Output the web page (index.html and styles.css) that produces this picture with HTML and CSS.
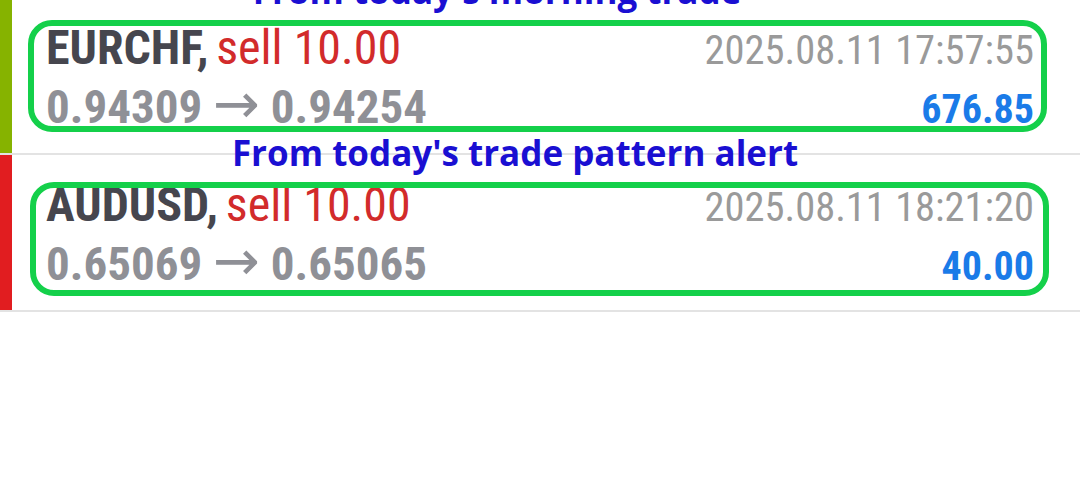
FILE: index.html
```html
<!DOCTYPE html>
<html lang="en">
<head>
  <meta charset="UTF-8" />
  <meta name="viewport" content="width=device-width, initial-scale=1.0" />
  <title>History</title>
  <link rel="stylesheet" href="styles.css">
</head>
<body>
  <div class="trades">
    <div class="trade">
      <div class="trade-bar green"></div>
      <div class="trade-body">
        <div class="trade-line">
          <span><b class="symbol">EURCHF,</b> <span class="side">sell 10.00</span></span>
          <span class="time">2025.08.11 17:57:55</span>
        </div>
        <div class="trade-line">
          <span class="prices">0.94309 <span class="arrow">&rarr;</span> 0.94254</span>
          <span class="profit">676.85</span>
        </div>
      </div>
      <div class="ring ring-first"></div>
    </div>

    <div class="trade">
      <div class="trade-bar red"></div>
      <div class="trade-body">
        <div class="trade-line">
          <span><b class="symbol">AUDUSD,</b> <span class="side">sell 10.00</span></span>
          <span class="time">2025.08.11 18:21:20</span>
        </div>
        <div class="trade-line">
          <span class="prices">0.65069 <span class="arrow">&rarr;</span> 0.65065</span>
          <span class="profit">40.00</span>
        </div>
      </div>
      <div class="ring ring-second"></div>
    </div>

    <div class="note note-first">From today's morning trade</div>
    <div class="note note-second">From today's trade pattern alert</div>
  </div>
</body>
</html>
```

FILE: styles.css
```css
body {
  margin: 0;
  background: #fff;
  overflow: hidden;
  font-family: "Roboto Condensed", Roboto, sans-serif;
  font-stretch: condensed;
}

.trades {
  position: relative;
  margin-top: -2px;
}

.trade {
  position: relative;
  display: flex;
  height: 155px;
  border-bottom: 2px solid #e3e3e3;
}

.trade-bar {
  width: 12px;
  flex-shrink: 0;
}

.green { background: #86b300; }
.red { background: #e11d20; }

.trade-body {
  flex: 1;
  padding: 22px 46px 0 34px;
}

.trade-line {
  display: flex;
  justify-content: space-between;
  align-items: baseline;
  height: 56px;
  line-height: 56px;
}

.symbol {
  font-size: 48px;
  font-weight: 700;
  color: #46464e;
  margin-right: 4px;
}

.side {
  font-size: 48px;
  color: #d22b2b;
}

.time {
  font-size: 40.5px;
  color: #9a9a9a;
}

.prices {
  font-size: 47px;
  font-weight: 700;
  color: #8f9096;
}

.arrow {
  font-family: "DejaVu Sans", sans-serif;
  font-stretch: normal;
  font-weight: 400;
  font-size: 56px;
  line-height: 1;
}

.profit {
  font-size: 40px;
  font-weight: 700;
  color: #1a7be8;
}

/* hand drawn highlight around each trade */
.ring {
  position: absolute;
  border: 6px solid #14d04a;
  border-radius: 24px;
  width: 1007px;
}

.ring-first {
  left: 28px;
  top: 22px;
  height: 100px;
}

.ring-second {
  left: 30px;
  top: 27px;
  height: 102px;
}

.note {
  position: absolute;
  transform: translateX(-50%);
  font-family: "Open Sans", sans-serif;
  font-stretch: normal;
  font-weight: 700;
  font-size: 35px;
  line-height: 40px;
  color: #1a0fd2;
  white-space: nowrap;
}

.note-first {
  left: 497px;
  top: -27px;
}

.note-second {
  left: 515px;
  top: 135px;
}
```
